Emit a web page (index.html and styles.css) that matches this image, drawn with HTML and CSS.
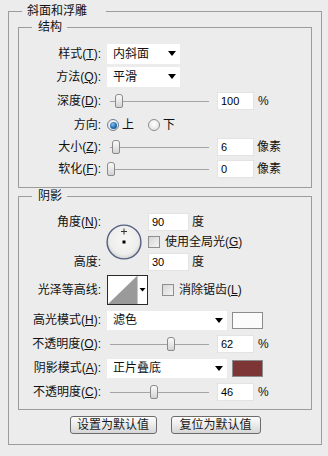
FILE: index.html
```html
<!DOCTYPE html>
<html lang="zh-CN">
<head>
<meta charset="utf-8">
<link rel="stylesheet" href="styles.css">
</head>
<body>
<div class="page">
  <fieldset class="group outer">
    <legend class="title">斜面和浮雕</legend>

    <fieldset class="group sub structure">
      <legend class="subtitle">结构</legend>
      <div class="row h23">
        <span class="lbl">样式(<u>T</u>):</span>
        <div class="select w73"><span>内斜面</span><i class="arrow"></i></div>
      </div>
      <div class="row h23">
        <span class="lbl">方法(<u>Q</u>):</span>
        <div class="select w73"><span>平滑</span><i class="arrow"></i></div>
      </div>
      <div class="row h25">
        <span class="lbl">深度(<u>D</u>):</span>
        <div class="slider"><i class="thumb" style="left:8px"></i></div>
        <span class="num">100</span><span class="unit pct">%</span>
      </div>
      <div class="row h24">
        <span class="lbl">方向:</span>
        <span class="radio on"><i class="dot"></i></span><span class="rtext">上</span>
        <span class="radio off"></span><span class="rtext">下</span>
      </div>
      <div class="row h20">
        <span class="lbl">大小(<u>Z</u>):</span>
        <div class="slider"><i class="thumb" style="left:5px"></i></div>
        <span class="num">6</span><span class="unit">像素</span>
      </div>
      <div class="row h24">
        <span class="lbl">软化(<u>F</u>):</span>
        <div class="slider"><i class="thumb" style="left:0px"></i></div>
        <span class="num">0</span><span class="unit">像素</span>
      </div>
    </fieldset>

    <fieldset class="group sub shadow">
      <legend class="subtitle">阴影</legend>
      <div class="angle">
        <span class="lbl a1">角度(<u>N</u>):</span>
        <svg class="dial" width="36" height="36" viewBox="0 0 36 36">
          <defs>
            <radialGradient id="dg" cx="50%" cy="45%" r="55%">
              <stop offset="0" stop-color="#f7f7f5"/>
              <stop offset="0.75" stop-color="#eeeeec"/>
              <stop offset="1" stop-color="#d2d2d2"/>
            </radialGradient>
          </defs>
          <circle cx="18" cy="18" r="16.9" fill="url(#dg)" stroke="#535f7e" stroke-width="1.4"/>
          <path d="M15 7.5h6M18 4.5v6" stroke="#333" stroke-width="1"/>
          <rect x="16.5" y="16.5" width="3" height="3" fill="#000"/>
        </svg>
        <div class="cell c1"><span class="num w41">90</span><span class="unit deg">度</span></div>
        <div class="cell c2"><span class="check"></span><span class="ctext">使用全局光(<u>G</u>)</span></div>
        <span class="lbl a3">高度:</span>
        <div class="cell c3"><span class="num w41">30</span><span class="unit deg">度</span></div>
      </div>
      <div class="row h36">
        <span class="lbl">光泽等高线:</span>
        <svg class="contour" width="41" height="30" viewBox="0 0 41 30">
          <rect x="0.5" y="0.5" width="40" height="29" fill="#fff" stroke="#2a2a2a"/>
          <polygon points="1,29 30,1 30,29" fill="#9a9a9a"/>
          <line x1="30.5" y1="1" x2="30.5" y2="29" stroke="#c8c8c8"/>
          <polygon points="32.5,13 38.5,13 35.5,16.5" fill="#000"/>
        </svg>
        <span class="check gap14"></span><span class="ctext">消除锯齿(<u>L</u>)</span>
      </div>
      <div class="row h24">
        <span class="lbl">高光模式(<u>H</u>):</span>
        <div class="select w120"><span>滤色</span><i class="arrow"></i></div>
        <span class="swatch white"></span>
      </div>
      <div class="row h24">
        <span class="lbl">不透明度(<u>O</u>):</span>
        <div class="slider"><i class="thumb" style="left:60px"></i></div>
        <span class="num">62</span><span class="unit pct">%</span>
      </div>
      <div class="row h24">
        <span class="lbl">阴影模式(<u>A</u>):</span>
        <div class="select w120"><span>正片叠底</span><i class="arrow"></i></div>
        <span class="swatch red"></span>
      </div>
      <div class="row h24">
        <span class="lbl">不透明度(<u>C</u>):</span>
        <div class="slider"><i class="thumb" style="left:43px"></i></div>
        <span class="num">46</span><span class="unit pct">%</span>
      </div>
    </fieldset>

    <div class="buttons">
      <button class="btn b1">设置为默认值</button>
      <button class="btn b2">复位为默认值</button>
    </div>
  </fieldset>
</div>
</body>
</html>
```

FILE: styles.css
```css
* { box-sizing: border-box; }
html, body { margin: 0; padding: 0; background: #ececec; }
body {
  font-family: "Liberation Sans", "Noto Sans CJK SC", sans-serif;
  font-size: 12px;
  line-height: 16px;
  color: #111;
  width: 328px;
  height: 456px;
  overflow: hidden;
}
u { text-decoration: underline; text-underline-offset: 1px; }

.page { padding: 3px 0 0 8px; }

fieldset.group {
  margin: 0;
  border: 1px solid #9c9c9c;
  min-width: 0;
}
legend { font-size: 12px; line-height: 16px; height: 16px; padding: 0; }

.outer { width: 314px; padding: 0 9px 10px 9px; }
.title { margin-left: 4px; padding: 0 19px 0 5px; }

.sub { margin-top: 3px; padding: 7px 0 6px 0; }
.shadow { padding: 8px 0 5px 0; }
.subtitle { margin-left: 13px; padding: 0 5px 0 6px; }

.row { display: flex; align-items: center; }
.h20 { height: 20px; }
.h23 { height: 23px; }
.h24 { height: 24px; }
.h25 { height: 25px; }
.h36 { height: 36px; }

.lbl {
  flex: none;
  width: 82px;
  margin-right: 6px;
  text-align: right;
  white-space: nowrap;
}

.select {
  flex: none;
  height: 20px;
  background: #fff;
  display: flex;
  align-items: center;
  justify-content: space-between;
  padding: 0 4px 0 6px;
}
.w73 { width: 73px; }
.w120 { width: 120px; height: 19px; }
.arrow {
  width: 0; height: 0;
  border-left: 4px solid transparent;
  border-right: 4px solid transparent;
  border-top: 5px solid #000;
}

.slider { position: relative; flex: none; width: 104px; height: 16px; }
.slider::before {
  content: "";
  position: absolute;
  left: 3px; right: 2px; top: 8px;
  height: 1px;
  background: #a4a4a4;
}
.thumb {
  position: absolute;
  top: 1px;
  width: 8px;
  height: 14px;
  border: 1px solid #8a8a8a;
  border-radius: 3px 3px 2px 2px;
  background: linear-gradient(#fbfbfb, #e4e4e4 60%, #d2d2d2);
}

.num {
  flex: none;
  display: block;
  width: 37px;
  height: 18px;
  margin-left: 6px;
  background: #fff;
  border: 1px solid #e3e3e3;
  padding-left: 3px;
  font-size: 11px;
  line-height: 16px;
  color: #000;
}
.w41 { width: 41px; margin-left: 0; }
.unit { margin-left: 3px; white-space: nowrap; }
.pct { margin-left: 4px; font-size: 12px; }
.deg { margin-left: 3px; }

.radio {
  flex: none;
  width: 12px; height: 12px;
  border-radius: 50%;
  border: 1px solid #8e8e8e;
  background: radial-gradient(circle at 50% 40%, #ffffff, #dcdcdc);
  display: flex;
  align-items: center;
  justify-content: center;
}
.radio.on { border-color: #6f7f94; }
.dot {
  width: 7px; height: 7px;
  border-radius: 50%;
  background: radial-gradient(circle at 40% 35%, #7fc0f0, #1d64a8 60%, #0d3f74);
}
.radio.off { margin-left: 14px; }
.rtext { margin-left: 3px; }

.angle {
  display: grid;
  grid-template-columns: 82px 47px auto;
  grid-template-rows: 20px 20px 20px;
  align-items: center;
}
.angle .lbl { width: 82px; margin-right: 0; }
.a1 { grid-column: 1; grid-row: 1; }
.a3 { grid-column: 1; grid-row: 3; }
.dial { grid-column: 2; grid-row: 1 / 4; margin-left: 5px; align-self: center; }
.cell { display: flex; align-items: center; grid-column: 3; }
.c1 { grid-row: 1; }
.c2 { grid-row: 2; }
.c3 { grid-row: 3; }

.check {
  flex: none;
  width: 12px; height: 12px;
  border: 1px solid #8e8e8e;
  background: linear-gradient(135deg, #d6d6d6, #f4f4f4);
}
.ctext { margin-left: 5px; white-space: nowrap; }
.gap14 { margin-left: 14px; }
.contour { flex: none; display: block; }

.swatch {
  flex: none;
  width: 31px;
  height: 17px;
  margin-left: 5px;
  border: 1px solid #8c8c8c;
}
.swatch.white { background: #fbfbfb; }
.swatch.red { background: #7d3535; }

.buttons {
  display: flex;
  justify-content: center;
  gap: 14px;
  margin-top: 6px;
}
.btn {
  height: 18px;
  padding: 0;
  font-family: "Liberation Sans", "Noto Sans CJK SC", sans-serif;
  font-size: 12px;
  line-height: 16px;
  color: #1a1a1a;
  border: 1px solid #6c6c6c;
  border-radius: 3px;
  background: linear-gradient(#fdfdfd, #ececec 45%, #d6d6d6);
}
.b1 { width: 87px; }
.b2 { width: 90px; }
```
